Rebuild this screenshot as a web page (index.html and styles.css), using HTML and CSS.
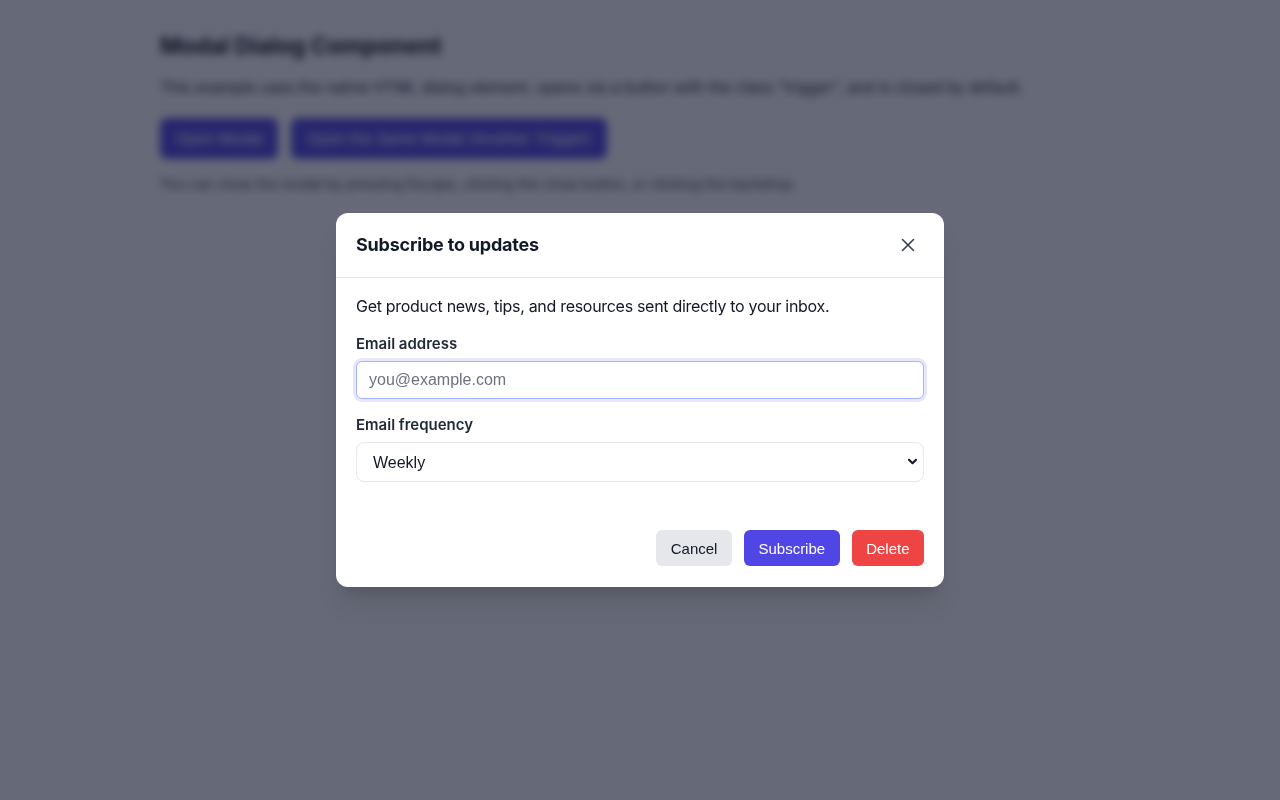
FILE: index.html
```html
<!DOCTYPE html>
<html lang="en">
<head>
<meta charset="utf-8">
<title>Modal Dialog Component</title>
<link rel="stylesheet" href="styles.css">
</head>
<body>
<main class="page">
  <h1 class="page-title">Modal Dialog Component</h1>
  <p class="page-text">This example uses the native HTML dialog element, opens via a button with the class "trigger", and is closed by default.</p>
  <div class="trigger-row">
    <button class="trigger">Open Modal</button>
    <button class="trigger">Open the Same Modal (Another Trigger)</button>
  </div>
  <p class="page-note">You can close the modal by pressing Escape, clicking the close button, or clicking the backdrop.</p>
</main>

<div class="backdrop">
  <div class="modal" role="dialog" aria-labelledby="modal-title">
    <header class="modal-header">
      <h2 class="modal-title" id="modal-title">Subscribe to updates</h2>
      <button class="close-btn" aria-label="Close">
        <svg width="16" height="16" viewBox="0 0 16 16" fill="none" stroke="#374151" stroke-width="1.6" stroke-linecap="round"><path d="M2.5 2.5l11 11M13.5 2.5l-11 11"/></svg>
      </button>
    </header>
    <div class="modal-body">
      <p class="modal-text">Get product news, tips, and resources sent directly to your inbox.</p>
      <div class="field">
        <label class="field-label" for="email">Email address</label>
        <input class="text-input is-focused" id="email" type="email" placeholder="you@example.com">
      </div>
      <div class="field">
        <label class="field-label" for="freq">Email frequency</label>
        <div class="select-wrap">
          <select class="select-input" id="freq">
            <option>Weekly</option>
            <option>Daily</option>
            <option>Monthly</option>
          </select>
          <svg class="select-chevron" width="12" height="8" viewBox="0 0 12 8" fill="none" stroke="#111827" stroke-width="2.4" stroke-linecap="round" stroke-linejoin="round"><path d="M2 2l4 4 4-4"/></svg>
        </div>
      </div>
    </div>
    <footer class="modal-footer">
      <button class="btn btn-cancel">Cancel</button>
      <button class="btn btn-primary">Subscribe</button>
      <button class="btn btn-danger">Delete</button>
    </footer>
  </div>
</div>
</body>
</html>
```

FILE: styles.css
```css
* { box-sizing: border-box; }

html, body {
  margin: 0;
  padding: 0;
  background: #ffffff;
  font-family: Inter, "Noto Sans", "Liberation Sans", sans-serif;
  color: #111827;
}

.page {
  max-width: 960px;
  margin: 0 auto;
  padding: 32px 0;
}

.page-title {
  margin: 0 0 16px;
  font-size: 22.9px;
  line-height: 28px;
  font-weight: 700;
  color: #111827;
}

.page-text {
  margin: 0 0 18px;
  font-size: 15.3px;
  line-height: 24px;
  color: #1f2937;
}

.trigger-row {
  display: flex;
  gap: 13px;
}

.trigger {
  height: 41px;
  padding: 0 16px;
  border: none;
  border-radius: 7px;
  background: #4f46e5;
  color: #ffffff;
  font-family: Inter, "Liberation Sans", sans-serif;
  font-size: 15px;
}

.page-note {
  margin: 15px 0 0;
  font-size: 14px;
  line-height: 20px;
  color: #374151;
}

.backdrop {
  position: fixed;
  inset: 0;
  background: rgba(15, 20, 42, 0.64);
  backdrop-filter: blur(4px);
  -webkit-backdrop-filter: blur(4px);
  display: flex;
  align-items: center;
  justify-content: center;
}

.modal {
  width: 608px;
  background: #ffffff;
  border-radius: 12px;
  box-shadow: 0 20px 25px -5px rgba(0, 0, 0, 0.12), 0 10px 10px -5px rgba(0, 0, 0, 0.06);
  overflow: hidden;
}

.modal-header {
  display: flex;
  align-items: center;
  justify-content: space-between;
  height: 65px;
  padding: 0 20px;
  border-bottom: 1px solid #e5e7eb;
}

.modal-title {
  margin: 0;
  font-size: 18px;
  line-height: 24px;
  font-weight: 700;
  letter-spacing: -0.2px;
  color: #111827;
}

.close-btn {
  width: 32px;
  height: 32px;
  padding: 0;
  border: none;
  background: transparent;
  display: flex;
  align-items: center;
  justify-content: center;
  border-radius: 6px;
}

.modal-body {
  padding: 16px 20px 0;
}

.modal-text {
  margin: 0 0 16px;
  font-size: 16px;
  line-height: 24px;
  letter-spacing: -0.3px;
  color: #111827;
}

.field {
  display: flex;
  flex-direction: column;
  margin-bottom: 16px;
}

.field:last-child { margin-bottom: 0; }

.field-label {
  font-size: 15px;
  line-height: 20px;
  font-weight: 600;
  color: #1f2937;
  margin-bottom: 7px;
}

.text-input {
  height: 38px;
  padding: 0 12px;
  border: 1px solid #d1d5db;
  border-radius: 6px;
  font-family: "Liberation Sans", Arial, sans-serif;
  font-size: 16px;
  color: #111827;
  outline: none;
}

.text-input::placeholder { color: #6b7280; }

.text-input.is-focused {
  border-color: #a5b4fc;
  box-shadow: 0 0 0 3px rgba(99, 102, 241, 0.16);
}

.select-wrap {
  position: relative;
}

.select-input {
  width: 100%;
  height: 40px;
  padding: 0 36px 0 16px;
  border: 1px solid #e5e7eb;
  border-radius: 8px;
  background: #ffffff;
  font-family: "Liberation Sans", Arial, sans-serif;
  font-size: 16px;
  color: #111827;
  appearance: none;
  -webkit-appearance: none;
}

.select-chevron {
  position: absolute;
  right: 6px;
  top: 16px;
  width: 11px;
  height: 7px;
  pointer-events: none;
}

.modal-footer {
  display: flex;
  justify-content: flex-end;
  gap: 12px;
  padding: 48px 20px 21px;
}

.btn {
  height: 36px;
  padding: 0 14.5px;
  border: none;
  border-radius: 6px;
  font-family: "Liberation Sans", Arial, sans-serif;
  font-size: 15px;
}

.btn-cancel { background: #e5e7eb; color: #111827; }
.btn-primary { background: #4f46e5; color: #ffffff; }
.btn-danger { background: #ef4444; color: #ffffff; }
```
